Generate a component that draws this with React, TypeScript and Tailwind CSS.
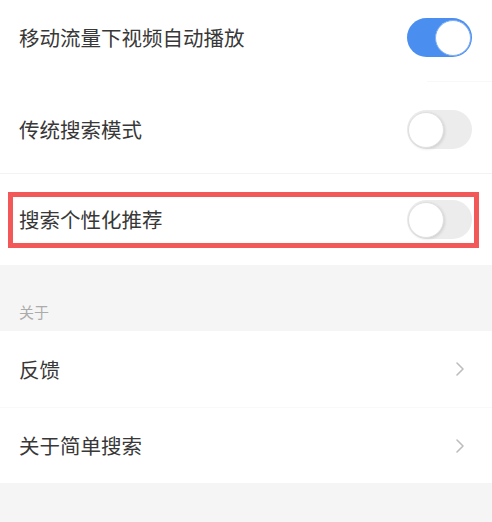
const font = { fontFamily: '"Noto Sans CJK SC", "Noto Sans", sans-serif' }

function Toggle({ on }: { on: boolean }) {
  return on ? (
    <div className="relative h-[39px] w-[65px] shrink-0 rounded-full bg-[#4a8ef0]">
      <div className="absolute right-[1px] top-[1.5px] h-[36px] w-[36px] rounded-full border-[1.5px] border-[#7fb0f5] bg-white" />
    </div>
  ) : (
    <div className="relative h-[39px] w-[65px] shrink-0 rounded-full bg-[#ececec]">
      <div className="absolute left-[1px] top-[1.5px] h-[36px] w-[36px] rounded-full border border-[#e0e0e0] bg-white shadow-[1px_1px_3px_rgba(0,0,0,0.12)]" />
    </div>
  )
}

function Chevron() {
  return (
    <svg width="12" height="16" viewBox="0 0 12 16" className="mr-[26px]">
      <path d="M3 2 L9 8 L3 14" fill="none" stroke="#bdbdbd" strokeWidth="1.6" strokeLinecap="round" strokeLinejoin="round" />
    </svg>
  )
}

export default function App() {
  return (
    <div className="h-[522px] w-[492px] overflow-hidden bg-white text-[#383838]" style={font}>
      {/* switch rows */}
      <div className="flex h-[81px] items-center justify-between pb-[6px] pl-[19px] pr-[20px]">
        <span className="text-[20.5px]">移动流量下视频自动播放</span>
        <Toggle on />
      </div>
      <div className="ml-[427px] h-px bg-[#f8f8f8]" />
      <div className="flex h-[91px] items-center justify-between pt-[4px] pl-[19px] pr-[20px]">
        <span className="text-[20.5px]">传统搜索模式</span>
        <Toggle on={false} />
      </div>
      <div className="h-px bg-[#f3f3f3]" />
      <div className="flex h-[91px] items-center">
        <div className="ml-[8px] flex h-[56px] w-[471px] items-center justify-between border-[5px] border-[#f25858] pl-[6px] pr-[2px]">
          <span className="text-[20.5px]">搜索个性化推荐</span>
          <Toggle on={false} />
        </div>
      </div>

      {/* about section */}
      <div className="flex h-[66px] items-end bg-[#f5f5f5] pb-[8px] pl-[19px]">
        <span className="text-[15px] text-[#ababab]">关于</span>
      </div>
      <div className="flex h-[76px] items-center justify-between pl-[19px]">
        <span className="text-[20.5px]">反馈</span>
        <Chevron />
      </div>
      <div className="h-px bg-[#f9f9f9]" />
      <div className="flex h-[75px] items-center justify-between pl-[19px]">
        <span className="text-[20.5px]">关于简单搜索</span>
        <Chevron />
      </div>
      <div className="h-[39px] bg-[#f5f5f5]" />
    </div>
  )
}
